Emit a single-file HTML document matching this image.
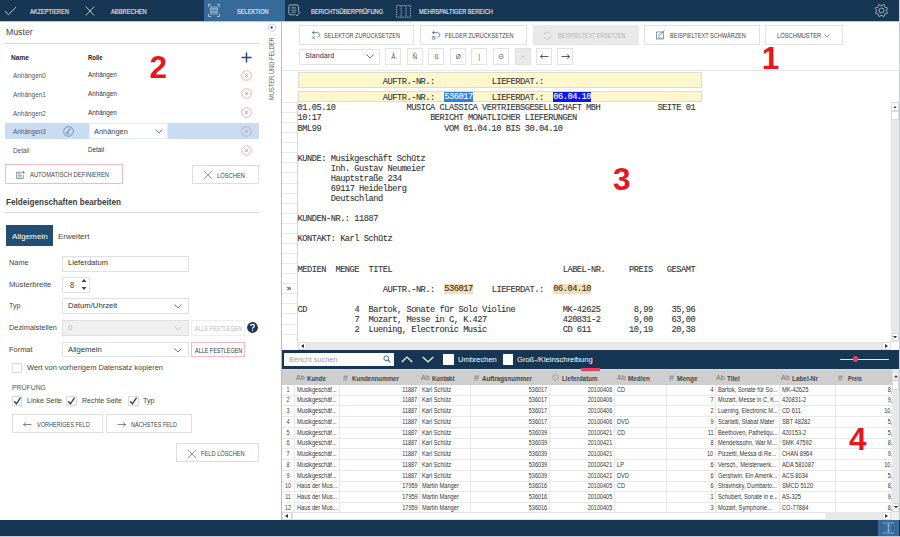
<!DOCTYPE html>
<html><head><meta charset="utf-8"><style>
html,body{margin:0;padding:0;}
body{width:900px;height:537px;overflow:hidden;position:relative;background:#fff;font-family:"Liberation Sans",sans-serif;}
.a{position:absolute;}
.t{position:absolute;white-space:pre;}
</style></head><body>
<div class="a" style="left:0.00px;top:0.00px;width:900.00px;height:21.00px;background:#163653"></div>
<div class="a" style="left:204.00px;top:0.00px;width:81.00px;height:21.00px;background:#366a98"></div>
<svg class="a" style="left:4.00px;top:6.00px;" width="13" height="10" viewBox="0 0 13 10"><polyline points="1,5 4.5,8.8 12,1" fill="none" stroke="#c9d3de" stroke-width="0.9"/></svg>
<div class="t" style="left:30.20px;top:6.58px;font-size:7.6px;line-height:10.64px;color:#e6ebf1;transform:scaleX(0.7388);transform-origin:0 0;-webkit-text-stroke:0.15px #e6ebf1;">AKZEPTIEREN</div>
<svg class="a" style="left:85.00px;top:6.00px;" width="10" height="10" viewBox="0 0 10 10"><path d="M0.8,0.5 L9.2,9.5 M9.2,0.5 L0.8,9.5" stroke="#c9d3de" stroke-width="0.9"/></svg>
<div class="t" style="left:111.00px;top:6.58px;font-size:7.6px;line-height:10.64px;color:#e6ebf1;transform:scaleX(0.7569);transform-origin:0 0;-webkit-text-stroke:0.15px #e6ebf1;">ABBRECHEN</div>
<svg class="a" style="left:208.00px;top:4.00px;" width="12" height="13" viewBox="0 0 12 13"><path d="M0.5,3 V0.5 H3 M9,0.5 H11.5 V3 M11.5,10 V12.5 H9 M3,12.5 H0.5 V10" fill="none" stroke="#c9d6e4" stroke-width="0.8"/><path d="M2.5,2.5 V10.5 M9.5,2.5 V10.5" stroke="#c9d6e4" stroke-width="0.6"/><path d="M3,3 H9 M3,4.4 H9 M3,5.8 H9 M3,7.2 H9 M3,8.6 H9 M3,10 H9" stroke="#c9d6e4" stroke-width="0.6"/></svg>
<div class="t" style="left:236.70px;top:6.58px;font-size:7.6px;line-height:10.64px;color:#e6ebf1;transform:scaleX(0.7408);transform-origin:0 0;-webkit-text-stroke:0.15px #e6ebf1;">SELEKTION</div>
<svg class="a" style="left:287.60px;top:4.20px;" width="14" height="14" viewBox="0 0 14 14"><path d="M6.5,10.8 H2.3 Q0.9,10.8 0.9,9.4 V2.3 Q0.9,0.9 2.3,0.9 H9.2 Q10.6,0.9 10.6,2.3 V8" fill="none" stroke="#c3ced9" stroke-width="0.8"/><path d="M3.3,3.3 H8.3 M3.3,5 H8.3 M3.3,6.7 H8.3 M3.3,8.4 H8.3" stroke="#aebccb" stroke-width="0.6"/><path d="M7.6,10.3 L9.1,11.9 L12.3,8.2" fill="none" stroke="#c3ced9" stroke-width="0.85"/></svg>
<div class="t" style="left:310.60px;top:6.58px;font-size:7.6px;line-height:10.64px;color:#e6ebf1;transform:scaleX(0.7424);transform-origin:0 0;-webkit-text-stroke:0.15px #e6ebf1;">BERICHTSÜBERPRÜFUNG</div>
<svg class="a" style="left:395.60px;top:4.60px;" width="15" height="13" viewBox="0 0 15 13"><rect x="0.6" y="0.6" width="14" height="11.6" fill="none" stroke="#a9b9ca" stroke-width="0.8" stroke-dasharray="1.6,0.7"/><path d="M5.1,0.6 V12.2 M10,0.6 V12.2" stroke="#a9b9ca" stroke-width="0.8" stroke-dasharray="1.6,0.7"/></svg>
<div class="t" style="left:418.90px;top:6.58px;font-size:7.6px;line-height:10.64px;color:#e6ebf1;transform:scaleX(0.7395);transform-origin:0 0;-webkit-text-stroke:0.15px #e6ebf1;">MEHRSPALTIGER BEREICH</div>
<svg class="a" style="left:874.30px;top:2.90px;" width="15" height="15" viewBox="0 0 15 15"><g transform="translate(7.5,7.5)" fill="none" stroke="#c9d3de" stroke-width="0.8"><polygon points="1.83,-6.03 2.97,-5.55 3.11,-3.79 3.79,-3.11 5.56,-2.97 6.03,-1.83 4.88,-0.48 4.88,0.48 6.03,1.83 5.55,2.97 3.79,3.11 3.11,3.79 2.97,5.56 1.83,6.03 0.48,4.88 -0.48,4.88 -1.83,6.03 -2.97,5.55 -3.11,3.79 -3.79,3.11 -5.56,2.97 -6.03,1.83 -4.88,0.48 -4.88,-0.48 -6.03,-1.83 -5.55,-2.97 -3.79,-3.11 -3.11,-3.79 -2.97,-5.56 -1.83,-6.03 -0.48,-4.88 0.48,-4.88" stroke-linejoin="round"/><circle r="2.5"/></g></svg>
<div class="a" style="left:0.00px;top:21.00px;width:900.00px;height:1.00px;background:#bcc6d0"></div>
<div class="t" style="left:5.60px;top:24.94px;font-size:9.94px;line-height:13.92px;color:#444;transform:scaleX(0.8789);transform-origin:0 0;">Muster</div>
<div class="a" style="left:5.00px;top:43.00px;width:254.00px;height:1.00px;background:#d6d6d6"></div>
<div class="t" style="left:10.90px;top:53.18px;font-size:6.6px;line-height:9.24px;color:#222;font-weight:bold;transform:scaleX(0.9957);transform-origin:0 0;">Name</div>
<div class="t" style="left:88.30px;top:53.18px;font-size:6.6px;line-height:9.24px;color:#222;font-weight:bold;transform:scaleX(0.9048);transform-origin:0 0;">Rolle</div>
<svg class="a" style="left:241.00px;top:52.00px;" width="11" height="11" viewBox="0 0 11 11"><path d="M5.5,0.5 V10.5 M0.5,5.5 H10.5" stroke="#244a70" stroke-width="1.5"/></svg>
<div class="a" style="left:5.00px;top:123.00px;width:253.60px;height:16.00px;background:#c8ddf4"></div>
<div class="t" style="left:13.40px;top:71.15px;font-size:7.34px;line-height:10.28px;color:#555;transform:scaleX(0.8761);transform-origin:0 0;">Anhängen0</div>
<div class="t" style="left:88.30px;top:70.25px;font-size:7.34px;line-height:10.28px;color:#333;transform:scaleX(0.8574);transform-origin:0 0;">Anhängen</div>
<svg class="a" style="left:240.80px;top:69.70px;" width="11" height="11" viewBox="0 0 11 11"><circle cx="5.5" cy="5.5" r="4.8" fill="none" stroke="#dc96a0" stroke-width="0.75"/><path d="M4,4 L7,7 M7,4 L4,7" stroke="#d88892" stroke-width="0.8"/></svg>
<div class="t" style="left:13.40px;top:89.85px;font-size:7.34px;line-height:10.28px;color:#555;transform:scaleX(0.8761);transform-origin:0 0;">Anhängen1</div>
<div class="t" style="left:88.30px;top:88.95px;font-size:7.34px;line-height:10.28px;color:#333;transform:scaleX(0.8574);transform-origin:0 0;">Anhängen</div>
<svg class="a" style="left:240.80px;top:88.40px;" width="11" height="11" viewBox="0 0 11 11"><circle cx="5.5" cy="5.5" r="4.8" fill="none" stroke="#dc96a0" stroke-width="0.75"/><path d="M4,4 L7,7 M7,4 L4,7" stroke="#d88892" stroke-width="0.8"/></svg>
<div class="t" style="left:13.40px;top:108.75px;font-size:7.34px;line-height:10.28px;color:#555;transform:scaleX(0.8761);transform-origin:0 0;">Anhängen2</div>
<div class="t" style="left:88.30px;top:107.85px;font-size:7.34px;line-height:10.28px;color:#333;transform:scaleX(0.8574);transform-origin:0 0;">Anhängen</div>
<svg class="a" style="left:240.80px;top:107.30px;" width="11" height="11" viewBox="0 0 11 11"><circle cx="5.5" cy="5.5" r="4.8" fill="none" stroke="#dc96a0" stroke-width="0.75"/><path d="M4,4 L7,7 M7,4 L4,7" stroke="#d88892" stroke-width="0.8"/></svg>
<div class="t" style="left:13.40px;top:127.15px;font-size:7.34px;line-height:10.28px;color:#555;transform:scaleX(0.8761);transform-origin:0 0;">Anhängen3</div>
<svg class="a" style="left:240.80px;top:125.70px;" width="11" height="11" viewBox="0 0 11 11"><circle cx="5.5" cy="5.5" r="4.8" fill="none" stroke="#dc96a0" stroke-width="0.75"/><path d="M4,4 L7,7 M7,4 L4,7" stroke="#d88892" stroke-width="0.8"/></svg>
<div class="t" style="left:13.40px;top:146.35px;font-size:7.34px;line-height:10.28px;color:#555;transform:scaleX(0.8739);transform-origin:0 0;">Detail</div>
<div class="t" style="left:88.30px;top:145.45px;font-size:7.34px;line-height:10.28px;color:#333;transform:scaleX(0.8632);transform-origin:0 0;">Detail</div>
<svg class="a" style="left:240.80px;top:144.90px;" width="11" height="11" viewBox="0 0 11 11"><circle cx="5.5" cy="5.5" r="4.8" fill="none" stroke="#dc96a0" stroke-width="0.75"/><path d="M4,4 L7,7 M7,4 L4,7" stroke="#d88892" stroke-width="0.8"/></svg>
<svg class="a" style="left:62.60px;top:125.70px;" width="11" height="11" viewBox="0 0 11 11"><circle cx="5.5" cy="5.4" r="4.8" fill="none" stroke="#5f87ac" stroke-width="0.9"/><path d="M3.4,7.3 L7.4,2.5" stroke="#5f87ac" stroke-width="1.1"/><path d="M3.6,7.7 H7.2" stroke="#5f87ac" stroke-width="0.7"/></svg>
<div class="a" style="left:88.60px;top:123.40px;width:79.70px;height:15.60px;background:#fff;border:1px solid #e6ebf0;box-sizing:border-box"></div>
<div class="t" style="left:93.60px;top:125.93px;font-size:7.88px;line-height:11.03px;color:#444;transform:scaleX(0.9406);transform-origin:0 0;">Anhängen</div>
<svg class="a" style="left:154.50px;top:128.50px;" width="8" height="5" viewBox="0 0 8 5"><polyline points="0.5,0.5 4,4 7.5,0.5" fill="none" stroke="#555" stroke-width="0.8"/></svg>
<div class="a" style="left:5.40px;top:164.40px;width:117.60px;height:19.20px;border:1px solid #f7b8c6;box-sizing:border-box;background:#fff"></div>
<svg class="a" style="left:15.80px;top:170.00px;" width="10" height="9" viewBox="0 0 10 9"><path d="M5.5,2.3 H0.6 V8.5 H7.3 V5" fill="none" stroke="#5f7a95" stroke-width="0.75"/><path d="M1.8,3.8 H4.6 M1.8,5.3 H5.8 M1.8,6.9 H5.8" stroke="#5f7a95" stroke-width="0.7"/><path d="M7.3,0.2 L7.8,1.7 L9.3,2.2 L7.8,2.7 L7.3,4.2 L6.8,2.7 L5.3,2.2 L6.8,1.7 Z" fill="#5f7a95"/></svg>
<div class="t" style="left:30.00px;top:169.95px;font-size:6.5px;line-height:9.1px;color:#444;transform:scaleX(0.8990);transform-origin:0 0;">AUTOMATISCH DEFINIEREN</div>
<div class="a" style="left:192.30px;top:165.00px;width:66.70px;height:19.20px;border:1px solid #dedede;box-sizing:border-box;background:#fff"></div>
<svg class="a" style="left:203.00px;top:170.00px;" width="10" height="10" viewBox="0 0 10 10"><path d="M0.8,0.8 L9.2,9.2 M9.2,0.8 L0.8,9.2" stroke="#6e7f92" stroke-width="0.8"/></svg>
<div class="t" style="left:217.10px;top:170.55px;font-size:6.5px;line-height:9.1px;color:#444;transform:scaleX(0.8878);transform-origin:0 0;">LÖSCHEN</div>
<div class="t" style="left:5.50px;top:195.62px;font-size:9.07px;line-height:12.7px;color:#3d3d3d;font-weight:bold;transform:scaleX(0.8983);transform-origin:0 0;">Feldeigenschaften bearbeiten</div>
<div class="a" style="left:5.00px;top:211.50px;width:254.00px;height:1.00px;background:#d6d6d6"></div>
<div class="a" style="left:6.40px;top:224.80px;width:46.50px;height:21.10px;background:#224e74"></div>
<div class="t" style="left:11.70px;top:230.75px;font-size:7.99px;line-height:11.19px;color:#fff;transform:scaleX(1.0203);transform-origin:0 0;">Allgemein</div>
<div class="t" style="left:58.40px;top:230.75px;font-size:7.99px;line-height:11.19px;color:#444;transform:scaleX(0.9961);transform-origin:0 0;">Erweitert</div>
<div class="t" style="left:9.30px;top:258.45px;font-size:7.34px;line-height:10.28px;color:#444;transform:scaleX(1.0010);transform-origin:0 0;">Name</div>
<div class="a" style="left:62.20px;top:255.60px;width:126.70px;height:16.00px;border:1px solid #e0e0e0;box-sizing:border-box;background:#fff"></div>
<div class="t" style="left:68.20px;top:258.45px;font-size:7.34px;line-height:10.28px;color:#333;transform:scaleX(1.0319);transform-origin:0 0;">Lieferdatum</div>
<div class="t" style="left:9.30px;top:280.05px;font-size:7.34px;line-height:10.28px;color:#444;transform:scaleX(1.0394);transform-origin:0 0;">Musterbreite</div>
<div class="a" style="left:62.20px;top:276.70px;width:28.20px;height:16.20px;border:1px solid #e0e0e0;box-sizing:border-box;background:#fff"></div>
<div class="t" style="left:69.80px;top:279.99px;font-size:8.3px;line-height:11.62px;color:#333;transform:scaleX(0.88);transform-origin:0 0;">8</div>
<svg class="a" style="left:81.00px;top:278.00px;" width="6" height="13" viewBox="0 0 6 13"><path d="M0.5,4 L3,1 L5.5,4 Z" fill="#1f4a74"/><path d="M0.5,9 L3,12 L5.5,9 Z" fill="#1f4a74"/></svg>
<div class="t" style="left:9.30px;top:301.35px;font-size:7.34px;line-height:10.28px;color:#444;transform:scaleX(0.9636);transform-origin:0 0;">Typ</div>
<div class="a" style="left:62.20px;top:298.40px;width:126.70px;height:16.00px;border:1px solid #e0e0e0;box-sizing:border-box;background:#fff"></div>
<div class="t" style="left:67.80px;top:301.35px;font-size:7.34px;line-height:10.28px;color:#333;transform:scaleX(1.0510);transform-origin:0 0;">Datum/Uhrzeit</div>
<svg class="a" style="left:174.00px;top:304.00px;" width="8" height="5" viewBox="0 0 8 5"><polyline points="0.5,0.5 4,4 7.5,0.5" fill="none" stroke="#555" stroke-width="0.8"/></svg>
<div class="t" style="left:9.30px;top:322.95px;font-size:7.34px;line-height:10.28px;color:#444;transform:scaleX(1.0057);transform-origin:0 0;">Dezimalstellen</div>
<div class="a" style="left:62.20px;top:320.00px;width:126.50px;height:16.00px;border:1px solid #dedede;box-sizing:border-box;background:#f0f0f0"></div>
<div class="t" style="left:68.20px;top:322.95px;font-size:7.34px;line-height:10.28px;color:#bbb;">0</div>
<svg class="a" style="left:174.00px;top:325.50px;" width="8" height="5" viewBox="0 0 8 5"><polyline points="0.5,0.5 4,4 7.5,0.5" fill="none" stroke="#bbb" stroke-width="0.8"/></svg>
<div class="a" style="left:191.30px;top:320.00px;width:54.00px;height:15.60px;border:1px solid #eeeeee;box-sizing:border-box;background:#fff"></div>
<div class="t" style="left:194.70px;top:324.11px;font-size:6.7px;line-height:9.38px;color:#bbb;transform:scaleX(0.8143);transform-origin:0 0;">ALLE FESTLEGEN</div>
<svg class="a" style="left:246.80px;top:322.40px;" width="11" height="11" viewBox="0 0 11 11"><circle cx="5.5" cy="5.5" r="5.4" fill="#16355a"/><g transform="translate(5.5,5.4)"><path d="M-1.8,-1.3 Q-1.8,-3.1 0,-3.1 Q1.8,-3.1 1.8,-1.5 Q1.8,-0.4 0.6,0.2 Q0,0.5 0,1.3" fill="none" stroke="#fff" stroke-width="1.25"/><circle cx="0" cy="2.8" r="0.75" fill="#fff"/></g></svg>
<div class="t" style="left:9.30px;top:344.55px;font-size:7.34px;line-height:10.28px;color:#444;transform:scaleX(1.0152);transform-origin:0 0;">Format</div>
<div class="a" style="left:62.20px;top:341.60px;width:126.50px;height:15.70px;border:1px solid #e0e0e0;box-sizing:border-box;background:#fff"></div>
<div class="t" style="left:67.80px;top:344.55px;font-size:7.34px;line-height:10.28px;color:#333;transform:scaleX(1.0487);transform-origin:0 0;">Allgemein</div>
<svg class="a" style="left:174.00px;top:347.50px;" width="8" height="5" viewBox="0 0 8 5"><polyline points="0.5,0.5 4,4 7.5,0.5" fill="none" stroke="#555" stroke-width="0.8"/></svg>
<div class="a" style="left:191.30px;top:341.60px;width:54.00px;height:15.70px;border:1px solid #f7b8c6;box-sizing:border-box;background:#fff"></div>
<div class="t" style="left:194.70px;top:345.71px;font-size:6.7px;line-height:9.38px;color:#333;transform:scaleX(0.8143);transform-origin:0 0;">ALLE FESTLEGEN</div>
<div class="a" style="left:11.60px;top:363.20px;width:10.60px;height:10.20px;border:1px solid #dadada;box-sizing:border-box;background:#fff"></div>
<div class="t" style="left:27.10px;top:363.45px;font-size:7.34px;line-height:10.28px;color:#444;transform:scaleX(1.0220);transform-origin:0 0;">Wert von vorherigem Datensatz kopieren</div>
<div class="t" style="left:11.60px;top:382.67px;font-size:6.9px;line-height:9.66px;color:#555;transform:scaleX(0.9966);transform-origin:0 0;">PRÜFUNG</div>
<div class="a" style="left:11.60px;top:396.10px;width:10.80px;height:10.20px;border:1px solid #dadada;box-sizing:border-box;background:#fff"></div>
<svg class="a" style="left:11.60px;top:396.10px;" width="11" height="10" viewBox="0 0 11 10"><polyline points="2.2,5.2 4.4,7.8 8.6,1.6" fill="none" stroke="#1f4a74" stroke-width="1.35"/></svg>
<div class="t" style="left:27.10px;top:396.15px;font-size:7.34px;line-height:10.28px;color:#444;transform:scaleX(0.9665);transform-origin:0 0;">Linke Seite</div>
<div class="a" style="left:66.20px;top:396.10px;width:10.80px;height:10.20px;border:1px solid #dadada;box-sizing:border-box;background:#fff"></div>
<svg class="a" style="left:66.20px;top:396.10px;" width="11" height="10" viewBox="0 0 11 10"><polyline points="2.2,5.2 4.4,7.8 8.6,1.6" fill="none" stroke="#1f4a74" stroke-width="1.35"/></svg>
<div class="t" style="left:81.80px;top:396.15px;font-size:7.34px;line-height:10.28px;color:#444;transform:scaleX(0.9518);transform-origin:0 0;">Rechte Seite</div>
<div class="a" style="left:127.80px;top:396.10px;width:10.80px;height:10.20px;border:1px solid #dadada;box-sizing:border-box;background:#fff"></div>
<svg class="a" style="left:127.80px;top:396.10px;" width="11" height="10" viewBox="0 0 11 10"><polyline points="2.2,5.2 4.4,7.8 8.6,1.6" fill="none" stroke="#1f4a74" stroke-width="1.35"/></svg>
<div class="t" style="left:142.90px;top:396.15px;font-size:7.34px;line-height:10.28px;color:#444;transform:scaleX(0.9720);transform-origin:0 0;">Typ</div>
<div class="a" style="left:12.20px;top:414.30px;width:91.10px;height:19.10px;border:1px solid #dedede;box-sizing:border-box;background:#fff"></div>
<svg class="a" style="left:22.50px;top:421.50px;" width="9" height="5" viewBox="0 0 9 5"><path d="M0.5,2.5 H8.5 M0.5,2.5 L2.8,0.5 M0.5,2.5 L2.8,4.5" fill="none" stroke="#455a70" stroke-width="0.7"/></svg>
<div class="t" style="left:36.70px;top:420.27px;font-size:6.9px;line-height:9.66px;color:#444;transform:scaleX(0.8038);transform-origin:0 0;">VORHERIGES FELD</div>
<div class="a" style="left:106.20px;top:414.30px;width:85.40px;height:19.10px;border:1px solid #dedede;box-sizing:border-box;background:#fff"></div>
<svg class="a" style="left:117.00px;top:421.50px;" width="9" height="5" viewBox="0 0 9 5"><path d="M0.5,2.5 H8.5 M8.5,2.5 L6.2,0.5 M8.5,2.5 L6.2,4.5" fill="none" stroke="#455a70" stroke-width="0.7"/></svg>
<div class="t" style="left:131.10px;top:420.27px;font-size:6.9px;line-height:9.66px;color:#444;transform:scaleX(0.8087);transform-origin:0 0;">NÄCHSTES FELD</div>
<div class="a" style="left:176.40px;top:443.40px;width:82.30px;height:18.90px;border:1px solid #dedede;box-sizing:border-box;background:#fff"></div>
<svg class="a" style="left:186.50px;top:448.50px;" width="10" height="10" viewBox="0 0 10 10"><path d="M0.8,0.8 L9.2,9.2 M9.2,0.8 L0.8,9.2" stroke="#6e7f92" stroke-width="0.8"/></svg>
<div class="t" style="left:200.90px;top:449.27px;font-size:6.9px;line-height:9.66px;color:#444;transform:scaleX(0.8278);transform-origin:0 0;">FELD LÖSCHEN</div>
<svg class="a" style="left:267.00px;top:23.00px;" width="10" height="10" viewBox="0 0 10 10"><path d="M2.2,7.1 A3.7,3.7 0 1 1 3.6,8.1" fill="none" stroke="#a3b0bd" stroke-width="0.7"/><circle cx="4.7" cy="4.5" r="1.15" fill="#244566"/></svg>
<div class="t" style="left:271.8px;top:99.5px;font-size:6.4px;line-height:8px;color:#606060;transform-origin:0 0;transform:rotate(-90deg) translate(0,-4px) scaleX(0.8996)">MUSTER UND FELDER</div>
<div class="a" style="left:281.00px;top:21.00px;width:1.00px;height:499.00px;background:#f1a3b6"></div>
<div class="a" style="left:899.00px;top:0.00px;width:1.00px;height:537.00px;background:#c9ced4"></div>
<div class="a" style="left:282.00px;top:70.00px;width:617.00px;height:1.00px;background:#e6e6e6"></div>
<div class="a" style="left:299.30px;top:25.30px;width:115.20px;height:19.70px;border:1px solid #e2e2e2;box-sizing:border-box;background:#fff"></div>
<svg class="a" style="left:310.80px;top:30.00px;" width="10" height="10" viewBox="0 0 10 10"><path d="M0.9,2.6 L3.2,0.7 L3.2,4.5 Z" fill="#4f6f90"/><path d="M3,2.6 H6 Q8.9,2.6 8.9,4.9 Q8.9,7 6.4,7" fill="none" stroke="#6f8aa6" stroke-width="0.95"/><path d="M1.2,6.3 L4,9.2 M4,6.3 L1.2,9.2" stroke="#4f6f90" stroke-width="0.8"/></svg>
<div class="t" style="left:324.10px;top:31.08px;font-size:6.6px;line-height:9.24px;color:#444;transform:scaleX(0.8401);transform-origin:0 0;">SELEKTOR ZURÜCKSETZEN</div>
<div class="a" style="left:419.90px;top:25.30px;width:107.40px;height:19.70px;border:1px solid #e2e2e2;box-sizing:border-box;background:#fff"></div>
<svg class="a" style="left:431.30px;top:30.00px;" width="10" height="10" viewBox="0 0 10 10"><path d="M0.9,2.6 L3.2,0.7 L3.2,4.5 Z" fill="#4f6f90"/><path d="M3,2.6 H6 Q8.9,2.6 8.9,4.9 Q8.9,7 6.4,7" fill="none" stroke="#6f8aa6" stroke-width="0.95"/><rect x="0.9" y="6" width="3.6" height="3.6" fill="#8aa2b8"/><path d="M0.9,7.2 H4.5 M0.9,8.4 H4.5" stroke="#fff" stroke-width="0.35"/></svg>
<div class="t" style="left:444.70px;top:31.08px;font-size:6.6px;line-height:9.24px;color:#444;transform:scaleX(0.8414);transform-origin:0 0;">FELDER ZURÜCKSETZEN</div>
<div class="a" style="left:532.90px;top:25.30px;width:106.60px;height:19.70px;background:#e9e9e9"></div>
<svg class="a" style="left:543.00px;top:30.50px;" width="9" height="9" viewBox="0 0 9 9"><path d="M1,4 Q1,1 4.5,1 Q7,1 7.8,3 M8,5 Q8,8 4.5,8 Q2,8 1.2,6" fill="none" stroke="#bdbdbd" stroke-width="0.7"/></svg>
<div class="t" style="left:557.80px;top:31.08px;font-size:6.6px;line-height:9.24px;color:#b3b3b3;transform:scaleX(0.8167);transform-origin:0 0;">BEISPIELTEXT ERSETZEN</div>
<div class="a" style="left:644.40px;top:25.30px;width:115.60px;height:19.70px;border:1px solid #e2e2e2;box-sizing:border-box;background:#fff"></div>
<svg class="a" style="left:655.50px;top:30.00px;" width="10" height="10" viewBox="0 0 10 10"><rect x="0.5" y="2" width="7" height="7" fill="none" stroke="#5a7590" stroke-width="0.7"/><path d="M2,6.5 L8.5,0.5" stroke="#5a7590" stroke-width="0.9"/><path d="M1.5,8 H6" stroke="#5a7590" stroke-width="0.7"/></svg>
<div class="t" style="left:670.00px;top:31.08px;font-size:6.6px;line-height:9.24px;color:#444;transform:scaleX(0.8436);transform-origin:0 0;">BEISPIELTEXT SCHWÄRZEN</div>
<div class="a" style="left:765.00px;top:25.10px;width:77.70px;height:19.90px;border:1px solid #e2e2e2;box-sizing:border-box;background:#fff"></div>
<div class="t" style="left:776.70px;top:31.08px;font-size:6.6px;line-height:9.24px;color:#444;transform:scaleX(0.8754);transform-origin:0 0;">LÖSCHMUSTER</div>
<svg class="a" style="left:824.00px;top:33.50px;" width="6" height="4" viewBox="0 0 6 4"><polyline points="0.5,0.5 3,3 5.5,0.5" fill="none" stroke="#555" stroke-width="0.7"/></svg>
<div class="a" style="left:299.30px;top:48.50px;width:80.60px;height:16.00px;border:1px solid #e2e2e2;box-sizing:border-box;background:#fff"></div>
<div class="t" style="left:304.70px;top:51.15px;font-size:7.34px;line-height:10.28px;color:#333;transform:scaleX(0.9835);transform-origin:0 0;">Standard</div>
<svg class="a" style="left:365.50px;top:54.00px;" width="8" height="5" viewBox="0 0 8 5"><polyline points="0.5,0.5 4,4 7.5,0.5" fill="none" stroke="#555" stroke-width="0.8"/></svg>
<div class="a" style="left:385.40px;top:48.20px;width:16.10px;height:16.40px;border:1px solid #e2e2e2;box-sizing:border-box;background:#fff"></div>
<div class="t" style="left:385.40px;top:49px;width:16px;text-align:center;font-size:6.5px;line-height:15px;color:#555">Å</div>
<div class="a" style="left:406.90px;top:48.20px;width:16.10px;height:16.40px;border:1px solid #e2e2e2;box-sizing:border-box;background:#fff"></div>
<div class="t" style="left:406.90px;top:49px;width:16px;text-align:center;font-size:6.5px;line-height:15px;color:#555">Ñ</div>
<div class="a" style="left:428.40px;top:48.20px;width:16.10px;height:16.40px;border:1px solid #e2e2e2;box-sizing:border-box;background:#fff"></div>
<div class="t" style="left:428.40px;top:49px;width:16px;text-align:center;font-size:6.5px;line-height:15px;color:#555">ß</div>
<div class="a" style="left:450.20px;top:48.20px;width:16.10px;height:16.40px;border:1px solid #e2e2e2;box-sizing:border-box;background:#fff"></div>
<div class="t" style="left:450.20px;top:49px;width:16px;text-align:center;font-size:6.5px;line-height:15px;color:#555">Ø</div>
<div class="a" style="left:471.40px;top:48.20px;width:16.10px;height:16.40px;border:1px solid #e2e2e2;box-sizing:border-box;background:#fff"></div>
<div class="t" style="left:471.40px;top:49px;width:16px;text-align:center;font-size:6.5px;line-height:15px;color:#555">|</div>
<div class="a" style="left:493.00px;top:48.20px;width:16.10px;height:16.40px;border:1px solid #e2e2e2;box-sizing:border-box;background:#fff"></div>
<div class="t" style="left:493.00px;top:49px;width:16px;text-align:center;font-size:6.5px;line-height:15px;color:#555">Θ</div>
<div class="a" style="left:514.50px;top:48.20px;width:16.10px;height:16.40px;background:#e9e9e9;border:1px solid #e0e0e0;box-sizing:border-box"></div>
<div class="t" style="left:514.50px;top:49px;width:16px;text-align:center;font-size:6.5px;line-height:15px;color:#bbb">¬</div>
<div class="a" style="left:536.00px;top:48.20px;width:16.10px;height:16.40px;border:1px solid #e2e2e2;box-sizing:border-box;background:#fff"></div>
<svg class="a" style="left:539.50px;top:53.50px;" width="9" height="5" viewBox="0 0 9 5"><path d="M0.5,2.5 H8.5 M0.5,2.5 L2.8,0.5 M0.5,2.5 L2.8,4.5" fill="none" stroke="#333" stroke-width="0.8"/></svg>
<div class="a" style="left:557.30px;top:48.20px;width:16.10px;height:16.40px;border:1px solid #e2e2e2;box-sizing:border-box;background:#fff"></div>
<svg class="a" style="left:560.80px;top:53.50px;" width="9" height="5" viewBox="0 0 9 5"><path d="M0.5,2.5 H8.5 M8.5,2.5 L6.2,0.5 M8.5,2.5 L6.2,4.5" fill="none" stroke="#333" stroke-width="0.8"/></svg>
<div class="a" style="left:298.00px;top:72.40px;width:403.50px;height:16.00px;background:#fef7ce;border:1px solid #dcdcd2;box-sizing:border-box"></div>
<div class="a" style="left:298.00px;top:91.10px;width:403.50px;height:10.60px;background:#fef7ce;border:1px solid #dcdcd2;box-sizing:border-box"></div>
<div class="t" style="left:382.81px;top:76.70px;font-size:8.7px;letter-spacing:-0.486px;line-height:10px;color:#333;font-family:'Liberation Mono',monospace;-webkit-text-stroke:0.1px #333;">AUFTR.-NR.:</div>
<div class="t" style="left:491.69px;top:76.70px;font-size:8.7px;letter-spacing:-0.486px;line-height:10px;color:#333;font-family:'Liberation Mono',monospace;-webkit-text-stroke:0.1px #333;">LIEFERDAT.:</div>
<div class="t" style="left:382.81px;top:92.70px;font-size:8.7px;letter-spacing:-0.486px;line-height:10px;color:#333;font-family:'Liberation Mono',monospace;-webkit-text-stroke:0.1px #333;">AUFTR.-NR.:</div>
<div class="t" style="left:444.35px;top:92.40px;font-size:8.7px;letter-spacing:-0.486px;line-height:10px;color:#fff;font-family:'Liberation Mono',monospace;-webkit-text-stroke:0.1px #fff;background:#2a82da;">536017</div>
<div class="t" style="left:491.69px;top:92.70px;font-size:8.7px;letter-spacing:-0.486px;line-height:10px;color:#333;font-family:'Liberation Mono',monospace;-webkit-text-stroke:0.1px #333;">LIEFERDAT.:</div>
<div class="t" style="left:553.24px;top:92.40px;font-size:8.7px;letter-spacing:-0.486px;line-height:10px;color:#fff;font-family:'Liberation Mono',monospace;-webkit-text-stroke:0.1px #fff;background:#0a18ee;">06.04.10</div>
<div class="a" style="left:297.00px;top:102.00px;width:1.00px;height:240.00px;background:#d4d4d4"></div>
<div class="a" style="left:282.00px;top:101.90px;width:15.00px;height:1.00px;background:#e8e8e8"></div>
<div class="a" style="left:282.00px;top:111.98px;width:15.00px;height:1.00px;background:#e8e8e8"></div>
<div class="a" style="left:282.00px;top:122.05px;width:15.00px;height:1.00px;background:#e8e8e8"></div>
<div class="a" style="left:282.00px;top:132.12px;width:15.00px;height:1.00px;background:#e8e8e8"></div>
<div class="a" style="left:282.00px;top:142.20px;width:15.00px;height:1.00px;background:#e8e8e8"></div>
<div class="a" style="left:282.00px;top:152.28px;width:15.00px;height:1.00px;background:#e8e8e8"></div>
<div class="a" style="left:282.00px;top:162.35px;width:15.00px;height:1.00px;background:#e8e8e8"></div>
<div class="a" style="left:282.00px;top:172.43px;width:15.00px;height:1.00px;background:#e8e8e8"></div>
<div class="a" style="left:282.00px;top:182.50px;width:15.00px;height:1.00px;background:#e8e8e8"></div>
<div class="a" style="left:282.00px;top:192.57px;width:15.00px;height:1.00px;background:#e8e8e8"></div>
<div class="a" style="left:282.00px;top:202.65px;width:15.00px;height:1.00px;background:#e8e8e8"></div>
<div class="a" style="left:282.00px;top:212.72px;width:15.00px;height:1.00px;background:#e8e8e8"></div>
<div class="a" style="left:282.00px;top:222.80px;width:15.00px;height:1.00px;background:#e8e8e8"></div>
<div class="a" style="left:282.00px;top:232.88px;width:15.00px;height:1.00px;background:#e8e8e8"></div>
<div class="a" style="left:282.00px;top:242.95px;width:15.00px;height:1.00px;background:#e8e8e8"></div>
<div class="a" style="left:282.00px;top:253.03px;width:15.00px;height:1.00px;background:#e8e8e8"></div>
<div class="a" style="left:282.00px;top:263.10px;width:15.00px;height:1.00px;background:#e8e8e8"></div>
<div class="a" style="left:282.00px;top:273.17px;width:15.00px;height:1.00px;background:#e8e8e8"></div>
<div class="a" style="left:282.00px;top:283.25px;width:15.00px;height:1.00px;background:#e8e8e8"></div>
<div class="a" style="left:282.00px;top:293.32px;width:15.00px;height:1.00px;background:#e8e8e8"></div>
<div class="a" style="left:282.00px;top:303.40px;width:15.00px;height:1.00px;background:#e8e8e8"></div>
<div class="a" style="left:282.00px;top:313.48px;width:15.00px;height:1.00px;background:#e8e8e8"></div>
<div class="a" style="left:282.00px;top:323.55px;width:15.00px;height:1.00px;background:#e8e8e8"></div>
<div class="a" style="left:282.00px;top:333.62px;width:15.00px;height:1.00px;background:#e8e8e8"></div>
<div class="t" style="left:286.8px;top:284.3px;font-size:8px;line-height:10px;color:#444;-webkit-text-stroke:0.2px #444">»</div>
<div class="t" style="left:297.60px;top:103.40px;font-size:8.7px;letter-spacing:-0.486px;line-height:10px;color:#333;font-family:'Liberation Mono',monospace;-webkit-text-stroke:0.1px #333;">01.05.10</div>
<div class="t" style="left:406.48px;top:103.40px;font-size:8.7px;letter-spacing:-0.486px;line-height:10px;color:#333;font-family:'Liberation Mono',monospace;-webkit-text-stroke:0.1px #333;">MUSICA CLASSICA VERTRIEBSGESELLSCHAFT MBH</div>
<div class="t" style="left:657.38px;top:103.40px;font-size:8.7px;letter-spacing:-0.486px;line-height:10px;color:#333;font-family:'Liberation Mono',monospace;-webkit-text-stroke:0.1px #333;">SEITE 01</div>
<div class="t" style="left:297.60px;top:113.48px;font-size:8.7px;letter-spacing:-0.486px;line-height:10px;color:#333;font-family:'Liberation Mono',monospace;-webkit-text-stroke:0.1px #333;">10:17</div>
<div class="t" style="left:430.15px;top:113.48px;font-size:8.7px;letter-spacing:-0.486px;line-height:10px;color:#333;font-family:'Liberation Mono',monospace;-webkit-text-stroke:0.1px #333;">BERICHT MONATLICHER LIEFERUNGEN</div>
<div class="t" style="left:297.60px;top:123.55px;font-size:8.7px;letter-spacing:-0.486px;line-height:10px;color:#333;font-family:'Liberation Mono',monospace;-webkit-text-stroke:0.1px #333;">BML99</div>
<div class="t" style="left:444.35px;top:123.55px;font-size:8.7px;letter-spacing:-0.486px;line-height:10px;color:#333;font-family:'Liberation Mono',monospace;-webkit-text-stroke:0.1px #333;">VOM 01.04.10 BIS 30.04.10</div>
<div class="t" style="left:297.60px;top:153.78px;font-size:8.7px;letter-spacing:-0.486px;line-height:10px;color:#333;font-family:'Liberation Mono',monospace;-webkit-text-stroke:0.1px #333;">KUNDE: Musikgeschäft Schütz</div>
<div class="t" style="left:330.74px;top:163.85px;font-size:8.7px;letter-spacing:-0.486px;line-height:10px;color:#333;font-family:'Liberation Mono',monospace;-webkit-text-stroke:0.1px #333;">Inh. Gustav Neumeier</div>
<div class="t" style="left:330.74px;top:173.93px;font-size:8.7px;letter-spacing:-0.486px;line-height:10px;color:#333;font-family:'Liberation Mono',monospace;-webkit-text-stroke:0.1px #333;">Hauptstraße 234</div>
<div class="t" style="left:330.74px;top:184.00px;font-size:8.7px;letter-spacing:-0.486px;line-height:10px;color:#333;font-family:'Liberation Mono',monospace;-webkit-text-stroke:0.1px #333;">69117 Heidelberg</div>
<div class="t" style="left:330.74px;top:194.07px;font-size:8.7px;letter-spacing:-0.486px;line-height:10px;color:#333;font-family:'Liberation Mono',monospace;-webkit-text-stroke:0.1px #333;">Deutschland</div>
<div class="t" style="left:297.60px;top:214.22px;font-size:8.7px;letter-spacing:-0.486px;line-height:10px;color:#333;font-family:'Liberation Mono',monospace;-webkit-text-stroke:0.1px #333;">KUNDEN-NR.: 11887</div>
<div class="t" style="left:297.60px;top:234.38px;font-size:8.7px;letter-spacing:-0.486px;line-height:10px;color:#333;font-family:'Liberation Mono',monospace;-webkit-text-stroke:0.1px #333;">KONTAKT: Karl Schütz</div>
<div class="t" style="left:297.60px;top:264.60px;font-size:8.7px;letter-spacing:-0.486px;line-height:10px;color:#333;font-family:'Liberation Mono',monospace;-webkit-text-stroke:0.1px #333;">MEDIEN  MENGE  TITEL</div>
<div class="t" style="left:562.70px;top:264.60px;font-size:8.7px;letter-spacing:-0.486px;line-height:10px;color:#333;font-family:'Liberation Mono',monospace;-webkit-text-stroke:0.1px #333;">LABEL-NR.</div>
<div class="t" style="left:628.98px;top:264.60px;font-size:8.7px;letter-spacing:-0.486px;line-height:10px;color:#333;font-family:'Liberation Mono',monospace;-webkit-text-stroke:0.1px #333;">PREIS</div>
<div class="t" style="left:666.85px;top:264.60px;font-size:8.7px;letter-spacing:-0.486px;line-height:10px;color:#333;font-family:'Liberation Mono',monospace;-webkit-text-stroke:0.1px #333;">GESAMT</div>
<div class="t" style="left:382.81px;top:284.75px;font-size:8.7px;letter-spacing:-0.486px;line-height:10px;color:#333;font-family:'Liberation Mono',monospace;-webkit-text-stroke:0.1px #333;">AUFTR.-NR.:</div>
<div class="t" style="left:491.69px;top:284.75px;font-size:8.7px;letter-spacing:-0.486px;line-height:10px;color:#333;font-family:'Liberation Mono',monospace;-webkit-text-stroke:0.1px #333;">LIEFERDAT.:</div>
<div class="t" style="left:297.60px;top:304.90px;font-size:8.7px;letter-spacing:-0.486px;line-height:10px;color:#333;font-family:'Liberation Mono',monospace;-webkit-text-stroke:0.1px #333;">CD</div>
<div class="t" style="left:354.41px;top:304.90px;font-size:8.7px;letter-spacing:-0.486px;line-height:10px;color:#333;font-family:'Liberation Mono',monospace;-webkit-text-stroke:0.1px #333;">4  Bartok, Sonate für Solo Violine</div>
<div class="t" style="left:562.70px;top:304.90px;font-size:8.7px;letter-spacing:-0.486px;line-height:10px;color:#333;font-family:'Liberation Mono',monospace;-webkit-text-stroke:0.1px #333;">MK-42625</div>
<div class="t" style="left:633.71px;top:304.90px;font-size:8.7px;letter-spacing:-0.486px;line-height:10px;color:#333;font-family:'Liberation Mono',monospace;-webkit-text-stroke:0.1px #333;">8,99</div>
<div class="t" style="left:671.59px;top:304.90px;font-size:8.7px;letter-spacing:-0.486px;line-height:10px;color:#333;font-family:'Liberation Mono',monospace;-webkit-text-stroke:0.1px #333;">35,96</div>
<div class="t" style="left:354.41px;top:314.98px;font-size:8.7px;letter-spacing:-0.486px;line-height:10px;color:#333;font-family:'Liberation Mono',monospace;-webkit-text-stroke:0.1px #333;">7  Mozart, Messe in C, K.427</div>
<div class="t" style="left:562.70px;top:314.98px;font-size:8.7px;letter-spacing:-0.486px;line-height:10px;color:#333;font-family:'Liberation Mono',monospace;-webkit-text-stroke:0.1px #333;">420831-2</div>
<div class="t" style="left:633.71px;top:314.98px;font-size:8.7px;letter-spacing:-0.486px;line-height:10px;color:#333;font-family:'Liberation Mono',monospace;-webkit-text-stroke:0.1px #333;">9,00</div>
<div class="t" style="left:671.59px;top:314.98px;font-size:8.7px;letter-spacing:-0.486px;line-height:10px;color:#333;font-family:'Liberation Mono',monospace;-webkit-text-stroke:0.1px #333;">63,00</div>
<div class="t" style="left:354.41px;top:325.05px;font-size:8.7px;letter-spacing:-0.486px;line-height:10px;color:#333;font-family:'Liberation Mono',monospace;-webkit-text-stroke:0.1px #333;">2  Luening, Electronic Music</div>
<div class="t" style="left:562.70px;top:325.05px;font-size:8.7px;letter-spacing:-0.486px;line-height:10px;color:#333;font-family:'Liberation Mono',monospace;-webkit-text-stroke:0.1px #333;">CD 611</div>
<div class="t" style="left:628.98px;top:325.05px;font-size:8.7px;letter-spacing:-0.486px;line-height:10px;color:#333;font-family:'Liberation Mono',monospace;-webkit-text-stroke:0.1px #333;">10,19</div>
<div class="t" style="left:671.59px;top:325.05px;font-size:8.7px;letter-spacing:-0.486px;line-height:10px;color:#333;font-family:'Liberation Mono',monospace;-webkit-text-stroke:0.1px #333;">20,38</div>
<div class="t" style="left:444.35px;top:284.45px;font-size:8.7px;letter-spacing:-0.486px;line-height:10px;color:#333;font-family:'Liberation Mono',monospace;-webkit-text-stroke:0.1px #333;background:#f8ddb0;">536017</div>
<div class="t" style="left:553.24px;top:284.45px;font-size:8.7px;letter-spacing:-0.486px;line-height:10px;color:#333;font-family:'Liberation Mono',monospace;-webkit-text-stroke:0.1px #333;background:#f8ddb0;">06.04.10</div>
<div class="a" style="left:891.30px;top:102.30px;width:7.70px;height:239.70px;background:#e8e8e8"></div>
<div class="a" style="left:891.30px;top:102.30px;width:7.70px;height:8.90px;background:#fff;border:1px solid #dadada;box-sizing:border-box"></div>
<svg class="a" style="left:893.30px;top:105.50px;" width="4" height="2.5" viewBox="0 0 4 2.5"><path d="M0,2.5 L2,0 L4,2.5Z" fill="#333"/></svg>
<div class="a" style="left:891.30px;top:111.20px;width:7.70px;height:8.40px;background:#fff;border:1px solid #dadada;box-sizing:border-box"></div>
<div class="a" style="left:891.80px;top:332.60px;width:7.20px;height:8.40px;background:#fff;border:1px solid #dadada;box-sizing:border-box"></div>
<svg class="a" style="left:893.40px;top:335.80px;" width="4" height="2.5" viewBox="0 0 4 2.5"><path d="M0,0 L2,2.5 L4,0Z" fill="#333"/></svg>
<div class="a" style="left:297.50px;top:342.00px;width:593.80px;height:7.50px;background:#e8e8e8"></div>
<div class="a" style="left:297.50px;top:342.00px;width:9.70px;height:7.50px;background:#fff;border:1px solid #dadada;box-sizing:border-box"></div>
<svg class="a" style="left:301.00px;top:344.00px;" width="3" height="4" viewBox="0 0 3 4"><path d="M3,0 L0,2 L3,4Z" fill="#333"/></svg>
<div class="a" style="left:881.70px;top:342.00px;width:9.60px;height:7.50px;background:#fff;border:1px solid #dadada;box-sizing:border-box"></div>
<svg class="a" style="left:885.30px;top:344.00px;" width="3" height="4" viewBox="0 0 3 4"><path d="M0,0 L3,2 L0,4Z" fill="#333"/></svg>
<div class="a" style="left:282.00px;top:350.00px;width:617.00px;height:19.00px;background:#163653"></div>
<div class="a" style="left:284.40px;top:352.50px;width:109.90px;height:13.50px;background:#fff"></div>
<div class="t" style="left:289.20px;top:354.95px;font-size:7.34px;line-height:10.28px;color:#a0a0a0;transform:scaleX(0.9989);transform-origin:0 0;">Bericht suchen</div>
<svg class="a" style="left:382.50px;top:354.80px;" width="8" height="8" viewBox="0 0 8 8"><circle cx="3.3" cy="3.3" r="2.4" fill="none" stroke="#2f5a85" stroke-width="0.9"/><path d="M5.1,5.1 L7.4,7.4" stroke="#2f5a85" stroke-width="1.1"/></svg>
<svg class="a" style="left:401.00px;top:356.30px;" width="12" height="7" viewBox="0 0 12 7"><polyline points="0.8,6 6,1 11.2,6" fill="none" stroke="#fff" stroke-width="1.25"/></svg>
<svg class="a" style="left:422.00px;top:356.30px;" width="12" height="7" viewBox="0 0 12 7"><polyline points="0.8,1 6,6 11.2,1" fill="none" stroke="#fff" stroke-width="1.25"/></svg>
<div class="a" style="left:443.30px;top:354.00px;width:10.70px;height:10.60px;background:#fff"></div>
<div class="t" style="left:458.00px;top:354.75px;font-size:7.34px;line-height:10.28px;color:#fff;transform:scaleX(1.0226);transform-origin:0 0;">Umbrechen</div>
<div class="a" style="left:502.50px;top:354.00px;width:10.50px;height:10.60px;background:#fff"></div>
<div class="t" style="left:516.60px;top:354.75px;font-size:7.34px;line-height:10.28px;color:#fff;transform:scaleX(1.0322);transform-origin:0 0;">Groß-/Kleinschreibung</div>
<div class="a" style="left:840.00px;top:358.70px;width:48.80px;height:1.60px;background:#e4e8ec;border-radius:1px"></div>
<div class="a" style="left:852.6px;top:356.4px;width:5.9px;height:5.9px;border-radius:50%;background:#f03c62"></div>
<div class="a" style="left:282.00px;top:369.00px;width:610.00px;height:16.00px;background:#cecece"></div>
<div class="a" style="left:282.00px;top:369.00px;width:610.00px;height:1.00px;background:#dadada"></div>
<div class="a" style="left:581.40px;top:368.30px;width:18.40px;height:2.30px;background:#f03c62"></div>
<div class="t" style="left:296.40px;top:372.78px;font-size:7.6px;line-height:10.64px;color:#747474;transform:scaleX(0.9359);transform-origin:0 0;">Ab</div>
<div class="t" style="left:306.90px;top:373.56px;font-size:6.8px;line-height:9.52px;color:#464646;font-weight:bold;transform:scaleX(0.8934);transform-origin:0 0;">Kunde</div>
<div class="t" style="left:343.00px;top:371.38px;font-size:9.6px;line-height:13.44px;color:#7a7a7a;transform:scaleX(0.9177);transform-origin:0 0;">#</div>
<div class="t" style="left:352.40px;top:373.56px;font-size:6.8px;line-height:9.52px;color:#464646;font-weight:bold;transform:scaleX(0.8996);transform-origin:0 0;">Kundennummer</div>
<div class="t" style="left:421.30px;top:372.78px;font-size:7.6px;line-height:10.64px;color:#747474;transform:scaleX(0.9359);transform-origin:0 0;">Ab</div>
<div class="t" style="left:432.40px;top:373.56px;font-size:6.8px;line-height:9.52px;color:#464646;font-weight:bold;transform:scaleX(0.8889);transform-origin:0 0;">Kontakt</div>
<div class="t" style="left:473.60px;top:371.38px;font-size:9.6px;line-height:13.44px;color:#7a7a7a;transform:scaleX(0.9177);transform-origin:0 0;">#</div>
<div class="t" style="left:482.20px;top:373.56px;font-size:6.8px;line-height:9.52px;color:#464646;font-weight:bold;transform:scaleX(0.9126);transform-origin:0 0;">Auftragsnummer</div>
<svg class="a" style="left:552.40px;top:373.80px;" width="7" height="7" viewBox="0 0 7 7"><circle cx="3.5" cy="3.5" r="2.9" fill="none" stroke="#8a8a8a" stroke-width="0.6"/><path d="M2.2,2.8 L3.5,3.8 L4.8,2.8" fill="none" stroke="#8a8a8a" stroke-width="0.5"/></svg>
<div class="t" style="left:562.20px;top:373.56px;font-size:6.8px;line-height:9.52px;color:#464646;font-weight:bold;transform:scaleX(0.9147);transform-origin:0 0;">Lieferdatum</div>
<div class="t" style="left:616.70px;top:372.78px;font-size:7.6px;line-height:10.64px;color:#747474;transform:scaleX(0.9359);transform-origin:0 0;">Ab</div>
<div class="t" style="left:627.80px;top:373.56px;font-size:6.8px;line-height:9.52px;color:#464646;font-weight:bold;transform:scaleX(0.9306);transform-origin:0 0;">Medien</div>
<div class="t" style="left:669.30px;top:371.38px;font-size:9.6px;line-height:13.44px;color:#7a7a7a;transform:scaleX(0.9177);transform-origin:0 0;">#</div>
<div class="t" style="left:677.30px;top:373.56px;font-size:6.8px;line-height:9.52px;color:#464646;font-weight:bold;transform:scaleX(0.9565);transform-origin:0 0;">Menge</div>
<div class="t" style="left:716.00px;top:372.78px;font-size:7.6px;line-height:10.64px;color:#747474;transform:scaleX(0.9359);transform-origin:0 0;">Ab</div>
<div class="t" style="left:727.20px;top:373.56px;font-size:6.8px;line-height:9.52px;color:#464646;font-weight:bold;transform:scaleX(0.9238);transform-origin:0 0;">Titel</div>
<div class="t" style="left:781.30px;top:372.78px;font-size:7.6px;line-height:10.64px;color:#747474;transform:scaleX(0.9359);transform-origin:0 0;">Ab</div>
<div class="t" style="left:792.00px;top:373.56px;font-size:6.8px;line-height:9.52px;color:#464646;font-weight:bold;transform:scaleX(0.9390);transform-origin:0 0;">Label-Nr</div>
<div class="t" style="left:838.00px;top:371.38px;font-size:9.6px;line-height:13.44px;color:#7a7a7a;transform:scaleX(0.9177);transform-origin:0 0;">#</div>
<div class="t" style="left:848.00px;top:373.56px;font-size:6.8px;line-height:9.52px;color:#464646;font-weight:bold;transform:scaleX(0.8356);transform-origin:0 0;">Preis</div>
<div class="a" style="left:282.00px;top:385.00px;width:610.00px;height:127.40px;background:#fff"></div>
<div class="a" style="left:282.00px;top:395.00px;width:610.00px;height:1.00px;background:#e8e8e8"></div>
<div class="a" style="left:282.00px;top:405.00px;width:610.00px;height:1.00px;background:#e8e8e8"></div>
<div class="a" style="left:282.00px;top:416.00px;width:610.00px;height:1.00px;background:#e8e8e8"></div>
<div class="a" style="left:282.00px;top:427.00px;width:610.00px;height:1.00px;background:#e8e8e8"></div>
<div class="a" style="left:282.00px;top:438.00px;width:610.00px;height:1.00px;background:#e8e8e8"></div>
<div class="a" style="left:282.00px;top:448.00px;width:610.00px;height:1.00px;background:#e8e8e8"></div>
<div class="a" style="left:282.00px;top:459.00px;width:610.00px;height:1.00px;background:#e8e8e8"></div>
<div class="a" style="left:282.00px;top:470.00px;width:610.00px;height:1.00px;background:#e8e8e8"></div>
<div class="a" style="left:282.00px;top:481.00px;width:610.00px;height:1.00px;background:#e8e8e8"></div>
<div class="a" style="left:282.00px;top:491.00px;width:610.00px;height:1.00px;background:#e8e8e8"></div>
<div class="a" style="left:282.00px;top:502.00px;width:610.00px;height:1.00px;background:#e8e8e8"></div>
<div class="a" style="left:294.00px;top:385.00px;width:1.00px;height:127.40px;background:#e8e8e8"></div>
<div class="a" style="left:339.00px;top:385.00px;width:1.00px;height:127.40px;background:#e8e8e8"></div>
<div class="a" style="left:419.00px;top:385.00px;width:1.00px;height:127.40px;background:#e8e8e8"></div>
<div class="a" style="left:470.00px;top:385.00px;width:1.00px;height:127.40px;background:#e8e8e8"></div>
<div class="a" style="left:549.00px;top:385.00px;width:1.00px;height:127.40px;background:#e8e8e8"></div>
<div class="a" style="left:614.00px;top:385.00px;width:1.00px;height:127.40px;background:#e8e8e8"></div>
<div class="a" style="left:666.00px;top:385.00px;width:1.00px;height:127.40px;background:#e8e8e8"></div>
<div class="a" style="left:715.00px;top:385.00px;width:1.00px;height:127.40px;background:#e8e8e8"></div>
<div class="a" style="left:779.00px;top:385.00px;width:1.00px;height:127.40px;background:#e8e8e8"></div>
<div class="a" style="left:835.00px;top:385.00px;width:1.00px;height:127.40px;background:#e8e8e8"></div>
<div class="t" style="left:288.30px;top:385.65px;font-size:6.35px;line-height:8.89px;color:#444;transform:translateX(-50%) scaleX(0.87);">1</div>
<div class="t" style="left:296.90px;top:385.65px;font-size:6.35px;line-height:8.89px;color:#333;transform:scaleX(0.9);transform-origin:0 0;">Musikgeschäf...</div>
<div class="t" style="right:482.80px;top:385.65px;font-size:6.35px;line-height:8.89px;color:#333;transform:scaleX(0.87);transform-origin:100% 0;">11887</div>
<div class="t" style="left:421.90px;top:385.65px;font-size:6.35px;line-height:8.89px;color:#333;transform:scaleX(0.9);transform-origin:0 0;">Karl Schütz</div>
<div class="t" style="right:353.20px;top:385.65px;font-size:6.35px;line-height:8.89px;color:#333;transform:scaleX(0.87);transform-origin:100% 0;">536017</div>
<div class="t" style="right:287.60px;top:385.65px;font-size:6.35px;line-height:8.89px;color:#333;transform:scaleX(0.87);transform-origin:100% 0;">20100406</div>
<div class="t" style="left:617.10px;top:385.65px;font-size:6.35px;line-height:8.89px;color:#333;transform:scaleX(0.9);transform-origin:0 0;">CD</div>
<div class="t" style="right:186.90px;top:385.65px;font-size:6.35px;line-height:8.89px;color:#333;transform:scaleX(0.87);transform-origin:100% 0;">4</div>
<div class="t" style="left:717.80px;top:385.65px;font-size:6.35px;line-height:8.89px;color:#333;transform:scaleX(0.9);transform-origin:0 0;">Bartok, Sonate für So...</div>
<div class="t" style="left:781.50px;top:385.65px;font-size:6.35px;line-height:8.89px;color:#333;transform:scaleX(0.9);transform-origin:0 0;">MK-42625</div>
<div class="t" style="right:7.80px;top:385.65px;font-size:6.35px;line-height:8.89px;color:#333;transform:scaleX(0.87);transform-origin:100% 0;">8,</div>
<div class="t" style="left:288.30px;top:396.39px;font-size:6.35px;line-height:8.89px;color:#444;transform:translateX(-50%) scaleX(0.87);">2</div>
<div class="t" style="left:296.90px;top:396.39px;font-size:6.35px;line-height:8.89px;color:#333;transform:scaleX(0.9);transform-origin:0 0;">Musikgeschäf...</div>
<div class="t" style="right:482.80px;top:396.39px;font-size:6.35px;line-height:8.89px;color:#333;transform:scaleX(0.87);transform-origin:100% 0;">11887</div>
<div class="t" style="left:421.90px;top:396.39px;font-size:6.35px;line-height:8.89px;color:#333;transform:scaleX(0.9);transform-origin:0 0;">Karl Schütz</div>
<div class="t" style="right:353.20px;top:396.39px;font-size:6.35px;line-height:8.89px;color:#333;transform:scaleX(0.87);transform-origin:100% 0;">536017</div>
<div class="t" style="right:287.60px;top:396.39px;font-size:6.35px;line-height:8.89px;color:#333;transform:scaleX(0.87);transform-origin:100% 0;">20100406</div>
<div class="t" style="right:186.90px;top:396.39px;font-size:6.35px;line-height:8.89px;color:#333;transform:scaleX(0.87);transform-origin:100% 0;">7</div>
<div class="t" style="left:717.80px;top:396.39px;font-size:6.35px;line-height:8.89px;color:#333;transform:scaleX(0.9);transform-origin:0 0;">Mozart, Messe in C, K...</div>
<div class="t" style="left:781.50px;top:396.39px;font-size:6.35px;line-height:8.89px;color:#333;transform:scaleX(0.9);transform-origin:0 0;">420831-2</div>
<div class="t" style="right:7.80px;top:396.39px;font-size:6.35px;line-height:8.89px;color:#333;transform:scaleX(0.87);transform-origin:100% 0;">9,</div>
<div class="t" style="left:288.30px;top:407.13px;font-size:6.35px;line-height:8.89px;color:#444;transform:translateX(-50%) scaleX(0.87);">3</div>
<div class="t" style="left:296.90px;top:407.13px;font-size:6.35px;line-height:8.89px;color:#333;transform:scaleX(0.9);transform-origin:0 0;">Musikgeschäf...</div>
<div class="t" style="right:482.80px;top:407.13px;font-size:6.35px;line-height:8.89px;color:#333;transform:scaleX(0.87);transform-origin:100% 0;">11887</div>
<div class="t" style="left:421.90px;top:407.13px;font-size:6.35px;line-height:8.89px;color:#333;transform:scaleX(0.9);transform-origin:0 0;">Karl Schütz</div>
<div class="t" style="right:353.20px;top:407.13px;font-size:6.35px;line-height:8.89px;color:#333;transform:scaleX(0.87);transform-origin:100% 0;">536017</div>
<div class="t" style="right:287.60px;top:407.13px;font-size:6.35px;line-height:8.89px;color:#333;transform:scaleX(0.87);transform-origin:100% 0;">20100406</div>
<div class="t" style="right:186.90px;top:407.13px;font-size:6.35px;line-height:8.89px;color:#333;transform:scaleX(0.87);transform-origin:100% 0;">2</div>
<div class="t" style="left:717.80px;top:407.13px;font-size:6.35px;line-height:8.89px;color:#333;transform:scaleX(0.9);transform-origin:0 0;">Luening, Electronic M...</div>
<div class="t" style="left:781.50px;top:407.13px;font-size:6.35px;line-height:8.89px;color:#333;transform:scaleX(0.9);transform-origin:0 0;">CD 611</div>
<div class="t" style="right:7.80px;top:407.13px;font-size:6.35px;line-height:8.89px;color:#333;transform:scaleX(0.87);transform-origin:100% 0;">10,</div>
<div class="t" style="left:288.30px;top:417.88px;font-size:6.35px;line-height:8.89px;color:#444;transform:translateX(-50%) scaleX(0.87);">4</div>
<div class="t" style="left:296.90px;top:417.88px;font-size:6.35px;line-height:8.89px;color:#333;transform:scaleX(0.9);transform-origin:0 0;">Musikgeschäf...</div>
<div class="t" style="right:482.80px;top:417.88px;font-size:6.35px;line-height:8.89px;color:#333;transform:scaleX(0.87);transform-origin:100% 0;">11887</div>
<div class="t" style="left:421.90px;top:417.88px;font-size:6.35px;line-height:8.89px;color:#333;transform:scaleX(0.9);transform-origin:0 0;">Karl Schütz</div>
<div class="t" style="right:353.20px;top:417.88px;font-size:6.35px;line-height:8.89px;color:#333;transform:scaleX(0.87);transform-origin:100% 0;">536017</div>
<div class="t" style="right:287.60px;top:417.88px;font-size:6.35px;line-height:8.89px;color:#333;transform:scaleX(0.87);transform-origin:100% 0;">20100406</div>
<div class="t" style="left:617.10px;top:417.88px;font-size:6.35px;line-height:8.89px;color:#333;transform:scaleX(0.9);transform-origin:0 0;">DVD</div>
<div class="t" style="right:186.90px;top:417.88px;font-size:6.35px;line-height:8.89px;color:#333;transform:scaleX(0.87);transform-origin:100% 0;">9</div>
<div class="t" style="left:717.80px;top:417.88px;font-size:6.35px;line-height:8.89px;color:#333;transform:scaleX(0.9);transform-origin:0 0;">Scarlatti, Stabat Mater</div>
<div class="t" style="left:781.50px;top:417.88px;font-size:6.35px;line-height:8.89px;color:#333;transform:scaleX(0.9);transform-origin:0 0;">SBT 48282</div>
<div class="t" style="right:7.80px;top:417.88px;font-size:6.35px;line-height:8.89px;color:#333;transform:scaleX(0.87);transform-origin:100% 0;">5,</div>
<div class="t" style="left:288.30px;top:428.61px;font-size:6.35px;line-height:8.89px;color:#444;transform:translateX(-50%) scaleX(0.87);">5</div>
<div class="t" style="left:296.90px;top:428.61px;font-size:6.35px;line-height:8.89px;color:#333;transform:scaleX(0.9);transform-origin:0 0;">Musikgeschäf...</div>
<div class="t" style="right:482.80px;top:428.61px;font-size:6.35px;line-height:8.89px;color:#333;transform:scaleX(0.87);transform-origin:100% 0;">11887</div>
<div class="t" style="left:421.90px;top:428.61px;font-size:6.35px;line-height:8.89px;color:#333;transform:scaleX(0.9);transform-origin:0 0;">Karl Schütz</div>
<div class="t" style="right:353.20px;top:428.61px;font-size:6.35px;line-height:8.89px;color:#333;transform:scaleX(0.87);transform-origin:100% 0;">536039</div>
<div class="t" style="right:287.60px;top:428.61px;font-size:6.35px;line-height:8.89px;color:#333;transform:scaleX(0.87);transform-origin:100% 0;">20100421</div>
<div class="t" style="left:617.10px;top:428.61px;font-size:6.35px;line-height:8.89px;color:#333;transform:scaleX(0.9);transform-origin:0 0;">CD</div>
<div class="t" style="right:186.90px;top:428.61px;font-size:6.35px;line-height:8.89px;color:#333;transform:scaleX(0.87);transform-origin:100% 0;">11</div>
<div class="t" style="left:717.80px;top:428.61px;font-size:6.35px;line-height:8.89px;color:#333;transform:scaleX(0.9);transform-origin:0 0;">Beethoven, Pathetiqu...</div>
<div class="t" style="left:781.50px;top:428.61px;font-size:6.35px;line-height:8.89px;color:#333;transform:scaleX(0.9);transform-origin:0 0;">420153-2</div>
<div class="t" style="right:7.80px;top:428.61px;font-size:6.35px;line-height:8.89px;color:#333;transform:scaleX(0.87);transform-origin:100% 0;">5,</div>
<div class="t" style="left:288.30px;top:439.35px;font-size:6.35px;line-height:8.89px;color:#444;transform:translateX(-50%) scaleX(0.87);">6</div>
<div class="t" style="left:296.90px;top:439.35px;font-size:6.35px;line-height:8.89px;color:#333;transform:scaleX(0.9);transform-origin:0 0;">Musikgeschäf...</div>
<div class="t" style="right:482.80px;top:439.35px;font-size:6.35px;line-height:8.89px;color:#333;transform:scaleX(0.87);transform-origin:100% 0;">11887</div>
<div class="t" style="left:421.90px;top:439.35px;font-size:6.35px;line-height:8.89px;color:#333;transform:scaleX(0.9);transform-origin:0 0;">Karl Schütz</div>
<div class="t" style="right:353.20px;top:439.35px;font-size:6.35px;line-height:8.89px;color:#333;transform:scaleX(0.87);transform-origin:100% 0;">536039</div>
<div class="t" style="right:287.60px;top:439.35px;font-size:6.35px;line-height:8.89px;color:#333;transform:scaleX(0.87);transform-origin:100% 0;">20100421</div>
<div class="t" style="right:186.90px;top:439.35px;font-size:6.35px;line-height:8.89px;color:#333;transform:scaleX(0.87);transform-origin:100% 0;">8</div>
<div class="t" style="left:717.80px;top:439.35px;font-size:6.35px;line-height:8.89px;color:#333;transform:scaleX(0.9);transform-origin:0 0;">Mendelssohn, War M...</div>
<div class="t" style="left:781.50px;top:439.35px;font-size:6.35px;line-height:8.89px;color:#333;transform:scaleX(0.9);transform-origin:0 0;">SMK 47592</div>
<div class="t" style="right:7.80px;top:439.35px;font-size:6.35px;line-height:8.89px;color:#333;transform:scaleX(0.87);transform-origin:100% 0;">8,</div>
<div class="t" style="left:288.30px;top:450.09px;font-size:6.35px;line-height:8.89px;color:#444;transform:translateX(-50%) scaleX(0.87);">7</div>
<div class="t" style="left:296.90px;top:450.09px;font-size:6.35px;line-height:8.89px;color:#333;transform:scaleX(0.9);transform-origin:0 0;">Musikgeschäf...</div>
<div class="t" style="right:482.80px;top:450.09px;font-size:6.35px;line-height:8.89px;color:#333;transform:scaleX(0.87);transform-origin:100% 0;">11887</div>
<div class="t" style="left:421.90px;top:450.09px;font-size:6.35px;line-height:8.89px;color:#333;transform:scaleX(0.9);transform-origin:0 0;">Karl Schütz</div>
<div class="t" style="right:353.20px;top:450.09px;font-size:6.35px;line-height:8.89px;color:#333;transform:scaleX(0.87);transform-origin:100% 0;">536039</div>
<div class="t" style="right:287.60px;top:450.09px;font-size:6.35px;line-height:8.89px;color:#333;transform:scaleX(0.87);transform-origin:100% 0;">20100421</div>
<div class="t" style="right:186.90px;top:450.09px;font-size:6.35px;line-height:8.89px;color:#333;transform:scaleX(0.87);transform-origin:100% 0;">10</div>
<div class="t" style="left:717.80px;top:450.09px;font-size:6.35px;line-height:8.89px;color:#333;transform:scaleX(0.9);transform-origin:0 0;">Pizzetti, Messa di Re...</div>
<div class="t" style="left:781.50px;top:450.09px;font-size:6.35px;line-height:8.89px;color:#333;transform:scaleX(0.9);transform-origin:0 0;">CHAN 8964</div>
<div class="t" style="right:7.80px;top:450.09px;font-size:6.35px;line-height:8.89px;color:#333;transform:scaleX(0.87);transform-origin:100% 0;">9,</div>
<div class="t" style="left:288.30px;top:460.83px;font-size:6.35px;line-height:8.89px;color:#444;transform:translateX(-50%) scaleX(0.87);">8</div>
<div class="t" style="left:296.90px;top:460.83px;font-size:6.35px;line-height:8.89px;color:#333;transform:scaleX(0.9);transform-origin:0 0;">Musikgeschäf...</div>
<div class="t" style="right:482.80px;top:460.83px;font-size:6.35px;line-height:8.89px;color:#333;transform:scaleX(0.87);transform-origin:100% 0;">11887</div>
<div class="t" style="left:421.90px;top:460.83px;font-size:6.35px;line-height:8.89px;color:#333;transform:scaleX(0.9);transform-origin:0 0;">Karl Schütz</div>
<div class="t" style="right:353.20px;top:460.83px;font-size:6.35px;line-height:8.89px;color:#333;transform:scaleX(0.87);transform-origin:100% 0;">536039</div>
<div class="t" style="right:287.60px;top:460.83px;font-size:6.35px;line-height:8.89px;color:#333;transform:scaleX(0.87);transform-origin:100% 0;">20100421</div>
<div class="t" style="left:617.10px;top:460.83px;font-size:6.35px;line-height:8.89px;color:#333;transform:scaleX(0.9);transform-origin:0 0;">LP</div>
<div class="t" style="right:186.90px;top:460.83px;font-size:6.35px;line-height:8.89px;color:#333;transform:scaleX(0.87);transform-origin:100% 0;">6</div>
<div class="t" style="left:717.80px;top:460.83px;font-size:6.35px;line-height:8.89px;color:#333;transform:scaleX(0.9);transform-origin:0 0;">Versch., Meisterwerk...</div>
<div class="t" style="left:781.50px;top:460.83px;font-size:6.35px;line-height:8.89px;color:#333;transform:scaleX(0.9);transform-origin:0 0;">ADA 581087</div>
<div class="t" style="right:7.80px;top:460.83px;font-size:6.35px;line-height:8.89px;color:#333;transform:scaleX(0.87);transform-origin:100% 0;">10,</div>
<div class="t" style="left:288.30px;top:471.57px;font-size:6.35px;line-height:8.89px;color:#444;transform:translateX(-50%) scaleX(0.87);">9</div>
<div class="t" style="left:296.90px;top:471.57px;font-size:6.35px;line-height:8.89px;color:#333;transform:scaleX(0.9);transform-origin:0 0;">Musikgeschäf...</div>
<div class="t" style="right:482.80px;top:471.57px;font-size:6.35px;line-height:8.89px;color:#333;transform:scaleX(0.87);transform-origin:100% 0;">11887</div>
<div class="t" style="left:421.90px;top:471.57px;font-size:6.35px;line-height:8.89px;color:#333;transform:scaleX(0.9);transform-origin:0 0;">Karl Schütz</div>
<div class="t" style="right:353.20px;top:471.57px;font-size:6.35px;line-height:8.89px;color:#333;transform:scaleX(0.87);transform-origin:100% 0;">536039</div>
<div class="t" style="right:287.60px;top:471.57px;font-size:6.35px;line-height:8.89px;color:#333;transform:scaleX(0.87);transform-origin:100% 0;">20100421</div>
<div class="t" style="left:617.10px;top:471.57px;font-size:6.35px;line-height:8.89px;color:#333;transform:scaleX(0.9);transform-origin:0 0;">DVD</div>
<div class="t" style="right:186.90px;top:471.57px;font-size:6.35px;line-height:8.89px;color:#333;transform:scaleX(0.87);transform-origin:100% 0;">6</div>
<div class="t" style="left:717.80px;top:471.57px;font-size:6.35px;line-height:8.89px;color:#333;transform:scaleX(0.9);transform-origin:0 0;">Gershwin, Ein Amerik...</div>
<div class="t" style="left:781.50px;top:471.57px;font-size:6.35px;line-height:8.89px;color:#333;transform:scaleX(0.9);transform-origin:0 0;">ACS 8034</div>
<div class="t" style="right:7.80px;top:471.57px;font-size:6.35px;line-height:8.89px;color:#333;transform:scaleX(0.87);transform-origin:100% 0;">5,</div>
<div class="t" style="left:288.30px;top:482.31px;font-size:6.35px;line-height:8.89px;color:#444;transform:translateX(-50%) scaleX(0.87);">10</div>
<div class="t" style="left:296.90px;top:482.31px;font-size:6.35px;line-height:8.89px;color:#333;transform:scaleX(0.9);transform-origin:0 0;">Haus der Mus...</div>
<div class="t" style="right:482.80px;top:482.31px;font-size:6.35px;line-height:8.89px;color:#333;transform:scaleX(0.87);transform-origin:100% 0;">17959</div>
<div class="t" style="left:421.90px;top:482.31px;font-size:6.35px;line-height:8.89px;color:#333;transform:scaleX(0.9);transform-origin:0 0;">Martin Manger</div>
<div class="t" style="right:353.20px;top:482.31px;font-size:6.35px;line-height:8.89px;color:#333;transform:scaleX(0.87);transform-origin:100% 0;">536016</div>
<div class="t" style="right:287.60px;top:482.31px;font-size:6.35px;line-height:8.89px;color:#333;transform:scaleX(0.87);transform-origin:100% 0;">20100405</div>
<div class="t" style="left:617.10px;top:482.31px;font-size:6.35px;line-height:8.89px;color:#333;transform:scaleX(0.9);transform-origin:0 0;">CD</div>
<div class="t" style="right:186.90px;top:482.31px;font-size:6.35px;line-height:8.89px;color:#333;transform:scaleX(0.87);transform-origin:100% 0;">6</div>
<div class="t" style="left:717.80px;top:482.31px;font-size:6.35px;line-height:8.89px;color:#333;transform:scaleX(0.9);transform-origin:0 0;">Stravinsky, Dumbarto...</div>
<div class="t" style="left:781.50px;top:482.31px;font-size:6.35px;line-height:8.89px;color:#333;transform:scaleX(0.9);transform-origin:0 0;">SMCD 5120</div>
<div class="t" style="right:7.80px;top:482.31px;font-size:6.35px;line-height:8.89px;color:#333;transform:scaleX(0.87);transform-origin:100% 0;">8,</div>
<div class="t" style="left:288.30px;top:493.05px;font-size:6.35px;line-height:8.89px;color:#444;transform:translateX(-50%) scaleX(0.87);">11</div>
<div class="t" style="left:296.90px;top:493.05px;font-size:6.35px;line-height:8.89px;color:#333;transform:scaleX(0.9);transform-origin:0 0;">Haus der Mus...</div>
<div class="t" style="right:482.80px;top:493.05px;font-size:6.35px;line-height:8.89px;color:#333;transform:scaleX(0.87);transform-origin:100% 0;">17959</div>
<div class="t" style="left:421.90px;top:493.05px;font-size:6.35px;line-height:8.89px;color:#333;transform:scaleX(0.9);transform-origin:0 0;">Martin Manger</div>
<div class="t" style="right:353.20px;top:493.05px;font-size:6.35px;line-height:8.89px;color:#333;transform:scaleX(0.87);transform-origin:100% 0;">536016</div>
<div class="t" style="right:287.60px;top:493.05px;font-size:6.35px;line-height:8.89px;color:#333;transform:scaleX(0.87);transform-origin:100% 0;">20100405</div>
<div class="t" style="right:186.90px;top:493.05px;font-size:6.35px;line-height:8.89px;color:#333;transform:scaleX(0.87);transform-origin:100% 0;">1</div>
<div class="t" style="left:717.80px;top:493.05px;font-size:6.35px;line-height:8.89px;color:#333;transform:scaleX(0.9);transform-origin:0 0;">Schubert, Sonate in e...</div>
<div class="t" style="left:781.50px;top:493.05px;font-size:6.35px;line-height:8.89px;color:#333;transform:scaleX(0.9);transform-origin:0 0;">AS-325</div>
<div class="t" style="right:7.80px;top:493.05px;font-size:6.35px;line-height:8.89px;color:#333;transform:scaleX(0.87);transform-origin:100% 0;">9,</div>
<div class="t" style="left:288.30px;top:503.79px;font-size:6.35px;line-height:8.89px;color:#444;transform:translateX(-50%) scaleX(0.87);">12</div>
<div class="t" style="left:296.90px;top:503.79px;font-size:6.35px;line-height:8.89px;color:#333;transform:scaleX(0.9);transform-origin:0 0;">Haus der Mus...</div>
<div class="t" style="right:482.80px;top:503.79px;font-size:6.35px;line-height:8.89px;color:#333;transform:scaleX(0.87);transform-origin:100% 0;">17959</div>
<div class="t" style="left:421.90px;top:503.79px;font-size:6.35px;line-height:8.89px;color:#333;transform:scaleX(0.9);transform-origin:0 0;">Martin Manger</div>
<div class="t" style="right:353.20px;top:503.79px;font-size:6.35px;line-height:8.89px;color:#333;transform:scaleX(0.87);transform-origin:100% 0;">536016</div>
<div class="t" style="right:287.60px;top:503.79px;font-size:6.35px;line-height:8.89px;color:#333;transform:scaleX(0.87);transform-origin:100% 0;">20100405</div>
<div class="t" style="right:186.90px;top:503.79px;font-size:6.35px;line-height:8.89px;color:#333;transform:scaleX(0.87);transform-origin:100% 0;">3</div>
<div class="t" style="left:717.80px;top:503.79px;font-size:6.35px;line-height:8.89px;color:#333;transform:scaleX(0.9);transform-origin:0 0;">Mozart, Symphonie...</div>
<div class="t" style="left:781.50px;top:503.79px;font-size:6.35px;line-height:8.89px;color:#333;transform:scaleX(0.9);transform-origin:0 0;">CO-77884</div>
<div class="t" style="right:7.80px;top:503.79px;font-size:6.35px;line-height:8.89px;color:#333;transform:scaleX(0.87);transform-origin:100% 0;">8,</div>
<div class="a" style="left:892.00px;top:369.00px;width:7.00px;height:143.40px;background:#e8e8e8"></div>
<div class="a" style="left:892.00px;top:372.00px;width:7.00px;height:8.20px;background:#fff;border:1px solid #dadada;box-sizing:border-box"></div>
<svg class="a" style="left:894.00px;top:375.20px;" width="4" height="2.5" viewBox="0 0 4 2.5"><path d="M0,2.5 L2,0 L4,2.5Z" fill="#333"/></svg>
<div class="a" style="left:892.00px;top:380.20px;width:7.00px;height:9.80px;background:#fff;border:1px solid #dadada;box-sizing:border-box"></div>
<div class="a" style="left:891.80px;top:502.70px;width:7.20px;height:9.10px;background:#fff;border:1px solid #dadada;box-sizing:border-box"></div>
<svg class="a" style="left:893.60px;top:506.20px;" width="4" height="2.5" viewBox="0 0 4 2.5"><path d="M0,0 L2,2.5 L4,0Z" fill="#333"/></svg>
<div class="a" style="left:282.00px;top:512.40px;width:617.00px;height:7.60px;background:#e8e8e8"></div>
<div class="a" style="left:282.00px;top:512.40px;width:9.50px;height:7.60px;background:#fff;border:1px solid #dadada;box-sizing:border-box"></div>
<svg class="a" style="left:284.50px;top:514.30px;" width="3" height="4" viewBox="0 0 3 4"><path d="M3,0 L0,2 L3,4Z" fill="#333"/></svg>
<div class="a" style="left:291.50px;top:512.40px;width:535.80px;height:7.60px;background:#fff;border:1px solid #e2e2e2;box-sizing:border-box"></div>
<div class="a" style="left:881.80px;top:512.40px;width:9.40px;height:7.60px;background:#fff;border:1px solid #dadada;box-sizing:border-box"></div>
<svg class="a" style="left:885.30px;top:514.30px;" width="3" height="4" viewBox="0 0 3 4"><path d="M0,0 L3,2 L0,4Z" fill="#333"/></svg>
<div class="a" style="left:891.20px;top:512.40px;width:7.80px;height:7.60px;background:#f0f0f0"></div>
<div class="a" style="left:0.00px;top:520.00px;width:900.00px;height:16.00px;background:#163653"></div>
<div class="a" style="left:877.80px;top:520.00px;width:21.50px;height:16.00px;background:#366a98"></div>
<svg class="a" style="left:882.00px;top:522.00px;" width="13" height="12" viewBox="0 0 13 12"><path d="M1,1 H12 M1,11 H12" stroke="#c9d6e4" stroke-width="0.6"/><path d="M6.5,2.5 V9.5" stroke="#c9d6e4" stroke-width="0.6"/><path d="M4.5,4.5 L6.5,2.5 L8.5,4.5 M4.5,7.5 L6.5,9.5 L8.5,7.5" fill="none" stroke="#c9d6e4" stroke-width="0.6"/></svg>
<div class="a" style="left:0.00px;top:536.00px;width:900.00px;height:1.00px;background:#c7ccd2"></div>
<div class="t" style="left:149.50px;top:48.50px;font-size:31.5px;line-height:36px;color:#e8141e;font-weight:bold">2</div>
<div class="t" style="left:761.70px;top:40.00px;font-size:31.5px;line-height:36px;color:#e8141e;font-weight:bold">1</div>
<div class="t" style="left:613.00px;top:161.20px;font-size:31.5px;line-height:36px;color:#e8141e;font-weight:bold">3</div>
<div class="t" style="left:849.00px;top:420.50px;font-size:31.5px;line-height:36px;color:#e8141e;font-weight:bold">4</div>
</body></html>
